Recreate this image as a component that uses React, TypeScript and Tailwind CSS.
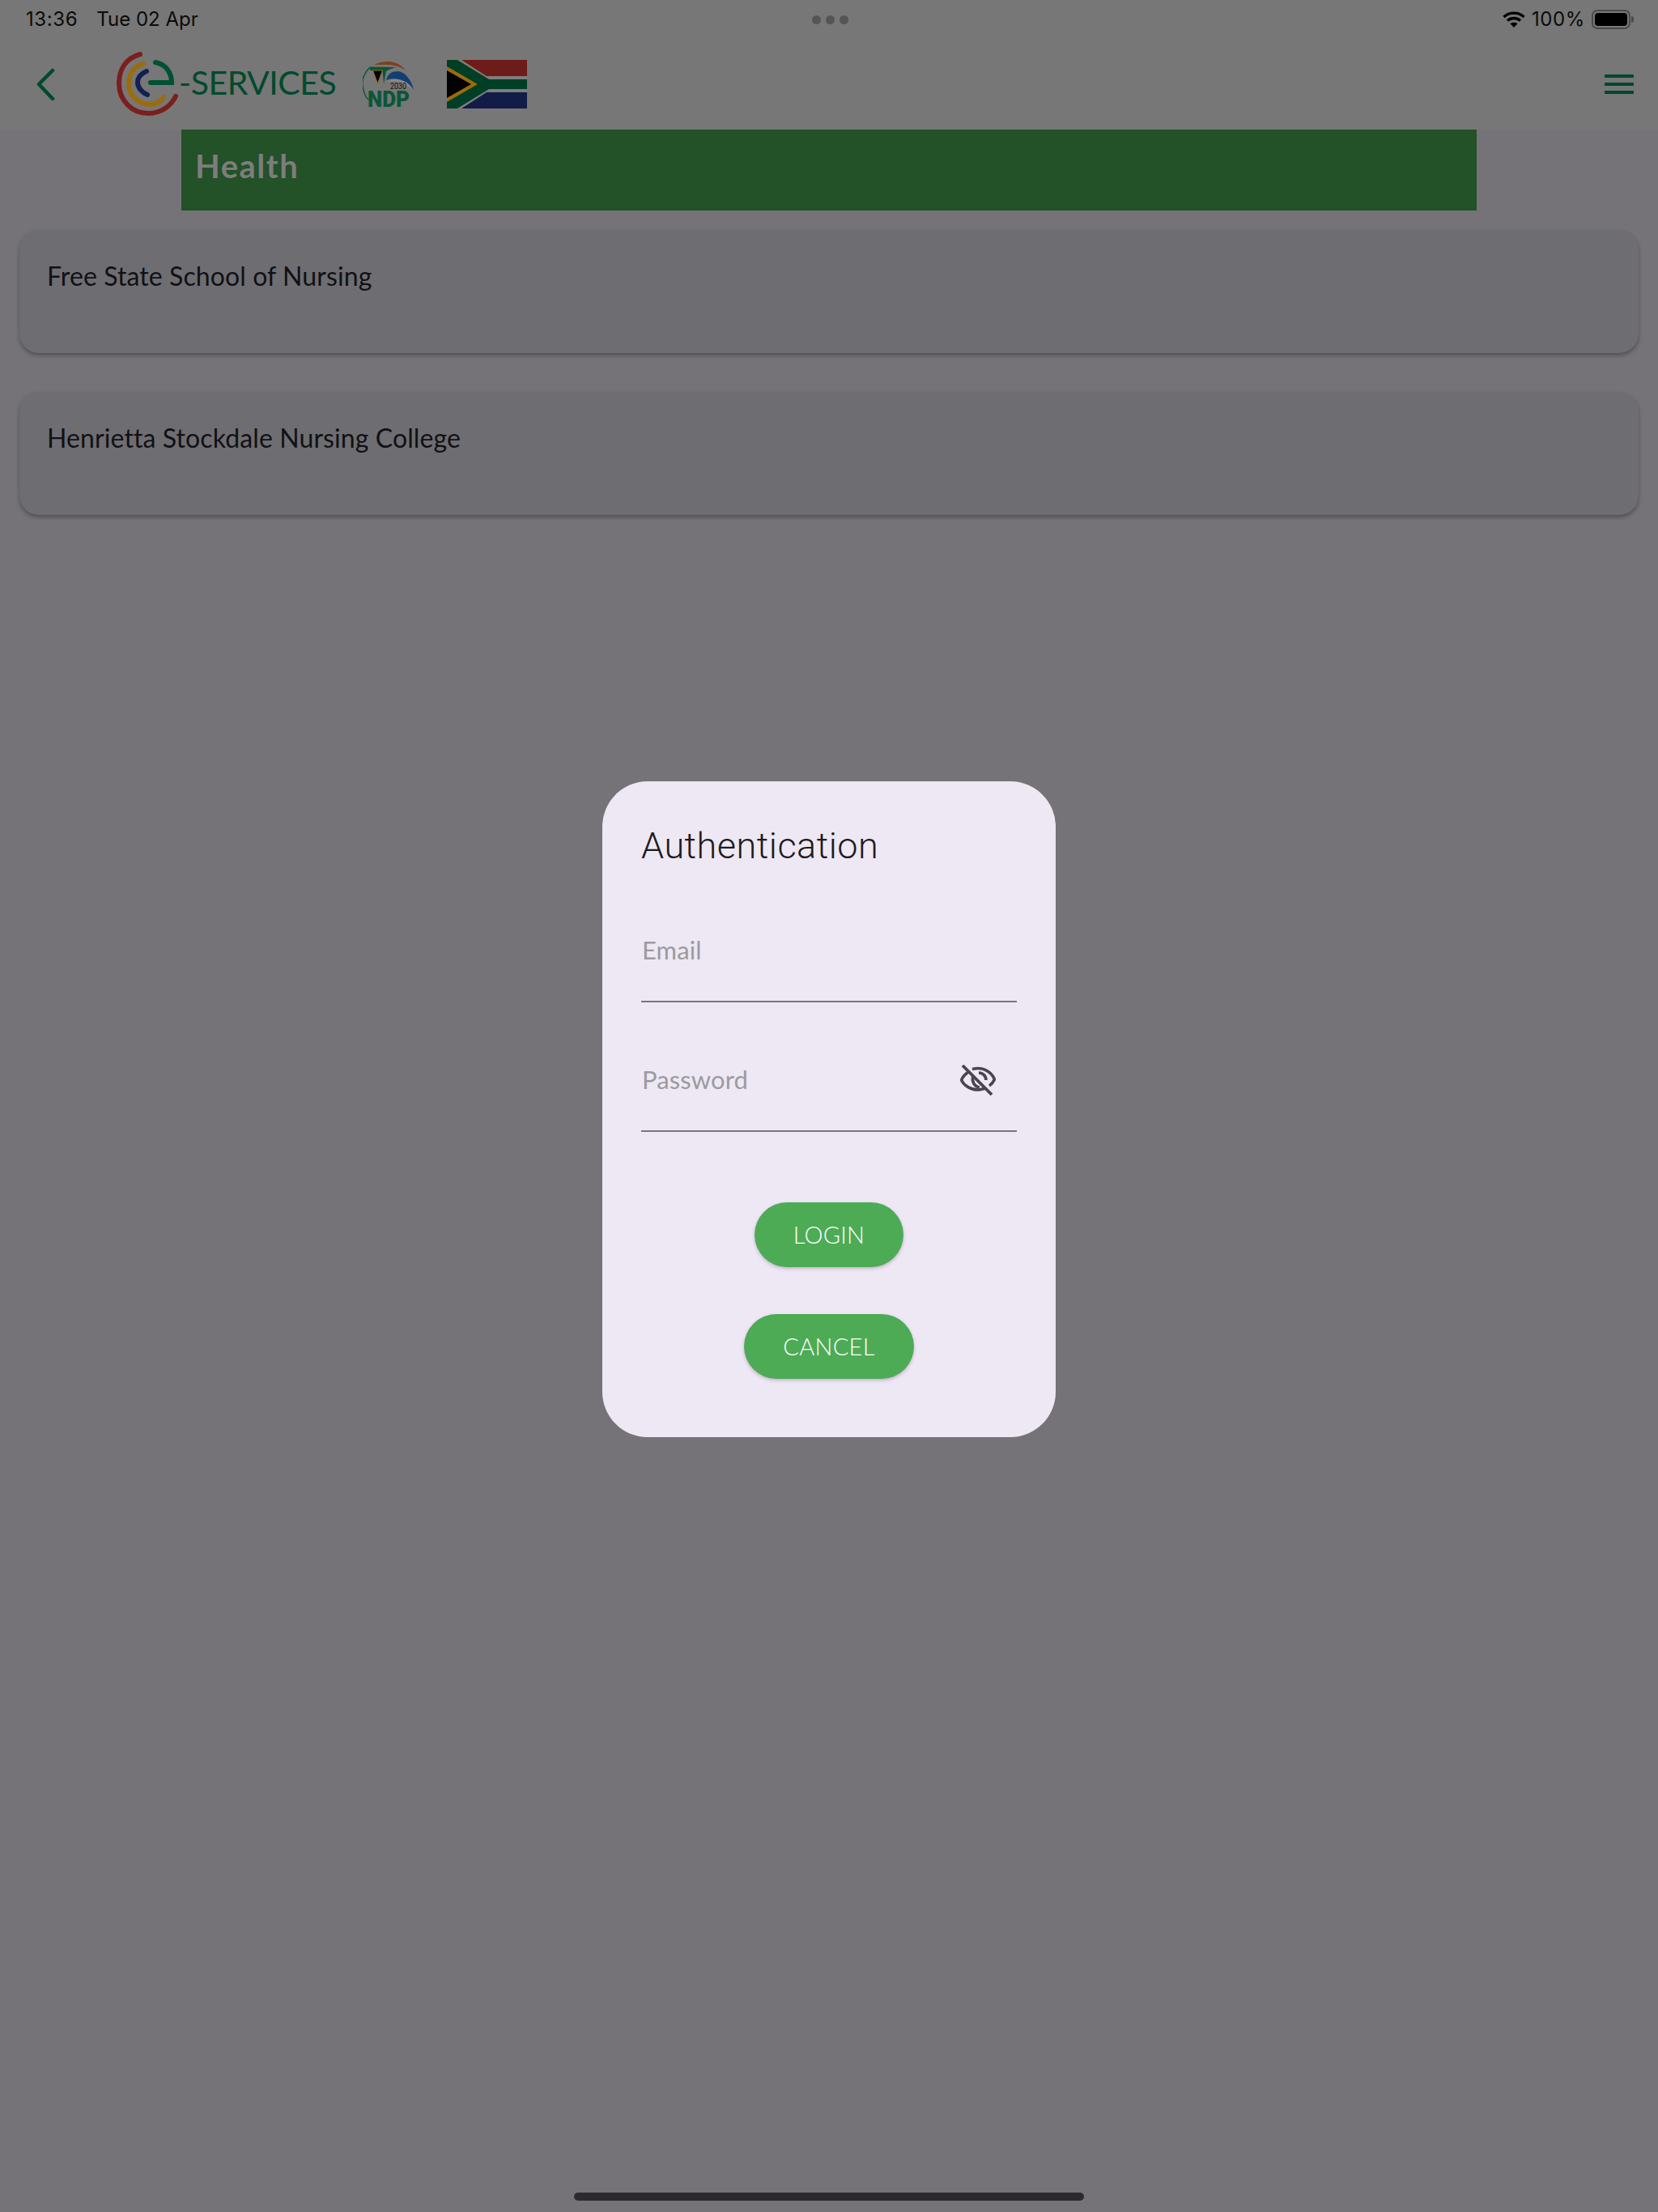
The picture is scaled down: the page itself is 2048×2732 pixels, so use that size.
import React from "react";

const gill = "font-['Lato','Open_Sans',sans-serif]";

function Wifi() {
  return (
    <svg width="28" height="20" viewBox="0 0 28 20" fill="none" stroke="#000" strokeWidth="3.4">
      <path d="M1.5 7 C8.5 0.5 19.5 0.5 26.5 7" />
      <path d="M6 11.5 C10.5 7.5 17.5 7.5 22 11.5" />
      <path d="M14 20 L9.5 15.2 C12 13.4 16 13.4 18.5 15.2 Z" fill="#000" stroke="none" />
    </svg>
  );
}

function Battery() {
  return (
    <div className="flex items-center gap-[1px]">
      <div className="w-[48px] h-[24px] rounded-[7px] border-2 border-[#4a4a4a] p-[2px]">
        <div className="w-full h-full rounded-[4px] bg-black" />
      </div>
      <div className="w-[3px] h-[8px] rounded-r-[3px] bg-[#4a4a4a]" />
    </div>
  );
}

function ELogo() {
  return (
    <svg width="78" height="80" viewBox="0 0 78 80" fill="none" strokeLinecap="round" className="shrink-0">
      <path d="M29 4 C12 9 3 22 3 40 C3 61 19 77 39 77 C55 77 67 68 73 56" stroke="#7a1f1d" strokeWidth="6" />
      <path d="M33 16 C22 18 15 28 15 40 C15 55 27 66 41 66 C48 66 54 63 58 57" stroke="#9a6c10" strokeWidth="6" />
      <path d="M37 25 C30 28 26 33 26 39 C26 45 31 51 38 54" stroke="#14204f" strokeWidth="6" />
      <path d="M42 39 L68 39 C68 26 60 16 48 14" stroke="#005033" strokeWidth="6" />
    </svg>
  );
}

function NdpLogo() {
  return (
    <svg width="64" height="66" viewBox="0 0 64 66" fill="none" className="shrink-0">
      <path d="M14 4 C20 1 26 0 31 0 C40 0 48 4 53 11 C46 6 38 4 31 4 C26 4 20 4 14 4 Z" fill="#7f3f1d" />
      <path d="M9 7 C2 14 -1 22 0 30 C1 38 3 43 7 47" stroke="#0b5638" strokeWidth="1.4" />
      <path d="M9 6.5 L42 7 C36 8 32 10 29 12 L26 28 L24.5 11 L9 11 Z" fill="#0b5638" />
      <path d="M12.5 11 L24.5 11 L18.5 27 Z" fill="#050505" stroke="#9a6c10" strokeWidth="1" />
      <path d="M29 23 C31 15 36 12 44 12 C52 13 60 22 63 35 C59 29 55 25 50 24 C44 21 36 20 29 23 Z" fill="#123f72" />
      <path d="M30 25 C36 21 44 21 50 24 C55 26 59 30 62 35 C56 30 52 28 48 26 C42 24 36 24 30 25 Z" fill="#8a8a8a" />
      <text x="34" y="33.5" fontFamily="Roboto, sans-serif" fontSize="10" textLength="20" lengthAdjust="spacingAndGlyphs" fill="#111">2030</text>
      <text x="6" y="56" fontFamily="Roboto, sans-serif" fontWeight="900" fontSize="28" textLength="52" lengthAdjust="spacingAndGlyphs" fill="#0b5638">NDP</text>
    </svg>
  );
}

function Flag() {
  return (
    <svg width="99" height="60" viewBox="0 0 99 60" className="shrink-0">
      <rect width="99" height="30" fill="#6e1c1a" />
      <rect y="30" width="99" height="30" fill="#121c47" />
      <path d="M0 0 L18 0 L49 20 L99 20 L99 40 L49 40 L18 60 L0 60 Z" fill="#7e7e7e" />
      <path d="M0 0 L13 0 L52 24 L99 24 L99 36 L52 36 L13 60 L0 60 Z" fill="#003f25" />
      <path d="M0 8 L38 30 L0 52 Z" fill="#9a6c10" />
      <path d="M0 13 L30 30 L0 47 Z" fill="#020202" />
    </svg>
  );
}

function EyeOff() {
  return (
    <svg width="44" height="38" viewBox="0 0 44 38" fill="none" stroke="#49454f" strokeWidth="3.6">
      <path d="M10 9 C6 12 3 15 1.5 19 C5 26 13 31 22 31 C25 31 28 30 31 29" />
      <path d="M15 5.5 C17 5 20 4.5 22 4.5 C31 4.5 39 10 42.5 18 C41 22 39 24 36 26" />
      <path d="M16 14 C14 20 17 27 24 28" />
      <path d="M23 10 C28 10 32 14 32 19" />
      <path d="M3 1 L39 37" strokeWidth="3.8" />
    </svg>
  );
}

function Field({ label, icon }: { label: string; icon?: boolean }) {
  return (
    <div className={`h-[84px] w-[464px] border-b-2 border-[#79747e] flex items-start justify-between pl-[1px] ${gill}`}>
      <span className="text-[31px] leading-[38px] tracking-[0.1px] text-[#9c9a9f] font-normal">{label}</span>
      {icon ? (
        <span className="mr-[26px] mt-[1px]">
          <EyeOff />
        </span>
      ) : null}
    </div>
  );
}

function DialogButton({ label }: { label: string }) {
  return (
    <button className={`h-[80px] px-[48px] rounded-full bg-[#4dab56] text-white text-[29px] tracking-[0.3px] font-light shadow-[0_2px_4px_rgba(90,60,110,0.3)] ${gill}`}>
      {label}
    </button>
  );
}

function Card({ label }: { label: string }) {
  return (
    <div className={`h-[152px] rounded-[24px] bg-[#6e6d72] shadow-[0_3px_5px_rgba(0,0,0,0.3)] pl-[34px] pt-[36px] text-[32px] leading-[42px] tracking-[0.1px] text-[#111114] ${gill}`}>
      {label}
    </div>
  );
}

export default function App() {
  return (
    <div className="relative w-[2048px] h-[2732px] overflow-hidden bg-[#757377]">
      <div className="h-[160px] bg-[#777777]">
        <div className="h-[48px] flex items-center justify-between pl-[32px] pr-[30px] font-['Inter',sans-serif] text-[24px] text-[#0a0a0a]">
          <div className="flex gap-[23px] w-[400px]">
            <span className="tracking-[0.6px]">13:36</span>
            <span>Tue 02 Apr</span>
          </div>
          <div className="flex gap-[6px]">
            <span className="w-[11px] h-[11px] rounded-full bg-[#555555]" />
            <span className="w-[11px] h-[11px] rounded-full bg-[#555555]" />
            <span className="w-[11px] h-[11px] rounded-full bg-[#555555]" />
          </div>
          <div className="flex items-center justify-end gap-[8px] w-[400px]">
            <Wifi />
            <span className="tracking-[0.6px]">100%</span>
            <Battery />
          </div>
        </div>
        <div className="h-[112px] flex items-start pl-[45px] pr-[30px]">
          <svg width="24" height="40" viewBox="0 0 24 40" fill="none" stroke="#004a2e" strokeWidth="4.5" strokeLinecap="round" strokeLinejoin="round" className="mt-[36px] shrink-0">
            <path d="M20 3 L3 20 L20 38" />
          </svg>
          <div className="ml-[75px] mt-[15px]">
            <ELogo />
          </div>
          <span className={`-ml-[1px] mt-[29px] text-[41px] leading-[50px] tracking-[-0.5px] text-[#004a2e] font-normal ${gill}`}>-SERVICES</span>
          <div className="ml-[33px] mt-[28px]">
            <NdpLogo />
          </div>
          <div className="ml-[40px] mt-[26px]">
            <Flag />
          </div>
          <div className="ml-auto mt-[44px] flex flex-col gap-[6px] w-[36px]">
            <div className="h-[4px] bg-[#00472e]" />
            <div className="h-[4px] bg-[#00472e]" />
            <div className="h-[4px] bg-[#00472e]" />
          </div>
        </div>
      </div>

      <div className={`mx-auto w-[1600px] h-[100px] bg-[#235128] pl-[17px] pt-[21px] text-[40px] leading-[48px] tracking-[1.5px] font-bold text-[#7d7d7d] ${gill}`}>
        Health
      </div>

      <div className="mt-[24px] px-[24px] flex flex-col gap-[48px]">
        <Card label="Free State School of Nursing" />
        <Card label="Henrietta Stockdale Nursing College" />
      </div>

      <div className="absolute inset-x-0 top-[965px] flex justify-center">
        <div className="w-[560px] h-[810px] rounded-[56px] bg-[#eee8f4] pl-[48px] pr-[48px] pt-[52px]">
          <h2 className="font-['Roboto',sans-serif] text-[45px] leading-[56px] tracking-[0.5px] font-light text-[#1d1b20]">Authentication</h2>
          <div className="mt-[81px] flex flex-col gap-[76px]">
            <Field label="Email" />
            <Field label="Password" icon />
          </div>
          <div className="mt-[87px] flex flex-col items-center gap-[58px]">
            <DialogButton label="LOGIN" />
            <DialogButton label="CANCEL" />
          </div>
        </div>
      </div>

      <div className="absolute bottom-[14px] left-[709px] w-[630px] h-[10px] rounded-full bg-[#2b2a2d]" />
    </div>
  );
}
